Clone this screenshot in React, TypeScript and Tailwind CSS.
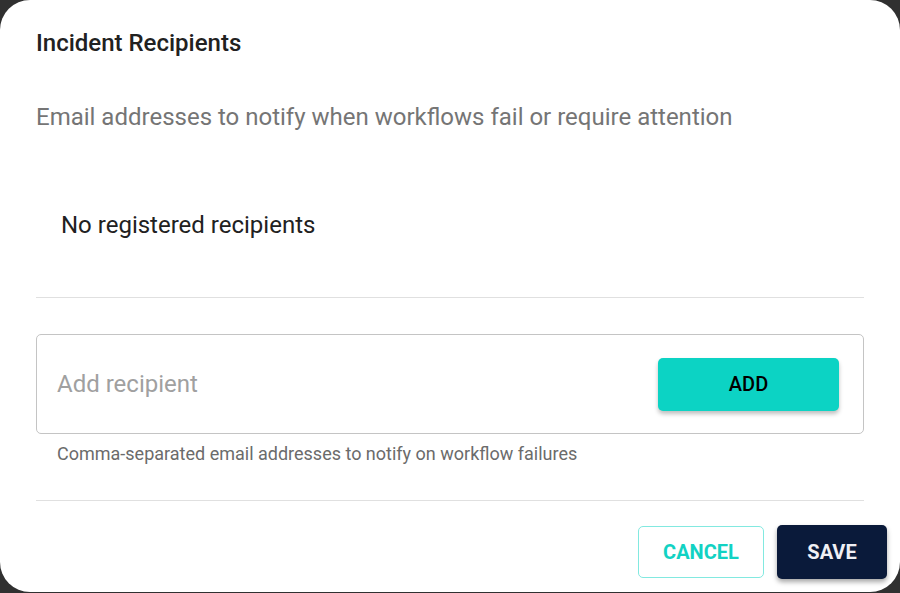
export default function App() {
  return (
    <div className="w-[900px] h-[593px] bg-[#303030] font-['Roboto',sans-serif]">
      <div className="h-[592px] bg-white rounded-[30px] flex flex-col">
        <div className="px-9 flex flex-col">
          <h2 className="pt-[27px] text-[24px] leading-[32px] font-medium text-[#212121]">
            Incident Recipients
          </h2>
          <p className="mt-[42px] text-[24px] leading-[32px] text-[#757575]">
            Email addresses to notify when workflows fail or require attention
          </p>
          <p className="mt-[76px] pl-[25px] text-[24px] leading-[32px] text-[#212121]">
            No registered recipients
          </p>
          <div className="mt-[56px] h-px bg-[#e0e0e0]" />
          <div className="mt-[36px] h-[100px] border border-[#c4c4c4] rounded-[5px] flex items-center justify-between pl-5 pr-6">
            <input
              placeholder="Add recipient"
              className="flex-1 bg-transparent outline-none text-[24px] leading-[32px] text-[#212121] placeholder:text-[#a0a0a0]"
            />
            <button className="w-[181px] h-[53px] rounded-[5px] bg-[#0cd3c4] text-black text-[20px] font-medium shadow-[0_3px_4px_rgba(0,0,0,0.25)]">
              ADD
            </button>
          </div>
          <p className="mt-[8px] pl-[21px] text-[18px] leading-[24px] text-[#6b6b6b]">
            Comma-separated email addresses to notify on workflow failures
          </p>
          <div className="mt-[34px] h-px bg-[#e0e0e0]" />
        </div>
        <div className="mt-[24px] flex justify-end items-center gap-[13px] pr-[13px]">
          <button className="w-[126px] h-[52px] rounded-[5px] border border-[#82e9e0] text-[#12d2c3] text-[20px] font-bold">
            CANCEL
          </button>
          <button className="w-[110px] h-[54px] rounded-[5px] bg-[#0a1a3a] text-[#f0f0f5] text-[20px] font-bold shadow-[0_3px_5px_rgba(0,0,0,0.35)]">
            SAVE
          </button>
        </div>
      </div>
    </div>
  );
}
